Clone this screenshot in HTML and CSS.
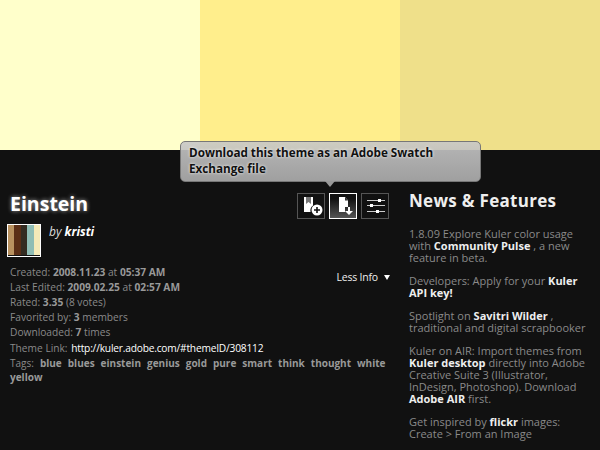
FILE: index.html
```html
<!DOCTYPE html>
<html lang="en">
<head>
<meta charset="utf-8">
<title>Einstein</title>
<link rel="stylesheet" href="styles.css">
</head>
<body>
<div class="app">
  <div class="swatches">
    <div class="swatch s1"></div>
    <div class="swatch s2"></div>
    <div class="swatch s3"></div>
  </div>
  <div class="panel">
    <div class="theme">
      <div class="head">
        <h1 class="title">Einstein</h1>
        <div class="tools">
          <span class="tool">
            <svg width="26" height="24" viewBox="0 0 26 24"><path d="M6 3h9v8.500a6.500 6.500 0 0 0-2.500 6.500H6z" fill="#fff"/><path d="M8 3h5v7l-2.500-2L8 10z" fill="#777"/><circle cx="19" cy="16" r="5.500" fill="#fff"/><path d="M16 16h6M19 13v6" stroke="#111" stroke-width="1.600"/></svg>
          </span>
          <span class="tool tool-on">
            <svg width="26" height="24" viewBox="0 0 26 24"><path d="M9 3h6l3 3.500V13h-3v5H9z" fill="#fff"/><path d="M15 3v3.500h3z" fill="#333"/><path d="M18 13h2v4h3l-4 4-4-4h3z" fill="#fff"/></svg>
          </span>
          <span class="tool">
            <svg width="26" height="24" viewBox="0 0 26 24"><path d="M5 6.500h18M5 11.500h18M5 17.500h18" stroke="#ccc"/><rect x="16" y="5" width="3" height="3" fill="#fff"/><rect x="8" y="10" width="3" height="3" fill="#fff"/><rect x="14" y="16" width="3" height="3" fill="#fff"/></svg>
          </span>
        </div>
      </div>
      <div class="author">
        <div class="thumb"><i class="c1"></i><i class="c2"></i><i class="c3"></i><i class="c4"></i><i class="c5"></i></div>
        <div class="by">by <b>kristi</b></div>
      </div>
      <div class="meta">
        <div class="rows">
          <p>Created: <b>2008.11.23</b> at <b>05:37 AM</b></p>
          <p>Last Edited: <b>2009.02.25</b> at <b>02:57 AM</b></p>
          <p>Rated: <b>3.35</b> (8 votes)</p>
          <p>Favorited by: <b>3</b> members</p>
          <p>Downloaded: <b>7</b> times</p>
        </div>
        <div class="less">Less Info <span class="tri"></span></div>
      </div>
      <p class="link">Theme Link: <span class="url">http://kuler.adobe.com/#themeID/308112</span></p>
      <p class="tags">Tags: <b>blue</b> <b>blues</b> <b>einstein</b> <b>genius</b> <b>gold</b> <b>pure</b> <b>smart</b> <b>think</b> <b>thought</b> <b>white</b> <b>yellow</b></p>
    </div>
    <aside class="news">
      <h2>News &amp; Features</h2>
      <p>1.8.09 Explore Kuler color usage with <b>Community Pulse</b> , a new feature in beta.</p>
      <p>Developers: Apply for your <b>Kuler API key!</b></p>
      <p>Spotlight on <b>Savitri Wilder</b> , traditional and digital scrapbooker</p>
      <p>Kuler on AIR: Import themes from <b>Kuler desktop</b> directly into Adobe Creative Suite 3 (Illustrator, InDesign, Photoshop). Download <b>Adobe AIR</b> first.</p>
      <p>Get inspired by <b>flickr</b> images: Create &gt; From an Image</p>
    </aside>
  </div>
  <div class="tip">Download this theme as an Adobe Swatch Exchange file</div>
</div>
</body>
</html>
```
FILE: styles.css
```css
html, body { margin: 0; padding: 0; }
body { background: #111; font-family: "Open Sans", "Noto Sans", sans-serif; color: #8a8a8a; }
p, h1, h2 { margin: 0; font-weight: normal; }
.app { position: relative; width: 600px; height: 450px; overflow: hidden; background: #111; }
.swatches { display: flex; height: 150px; }
.swatch { width: 200px; }
.s1 { background: #ffffcb; }
.s2 { background: #ffee8c; }
.s3 { background: #efe08a; }
.panel { display: flex; height: 300px; }
.theme { width: 379px; margin-left: 10px; flex: none; padding-top: 43px; }
.head { display: flex; justify-content: space-between; align-items: flex-start; }
.title { font-size: 19.500px; line-height: 22px; font-weight: 700; color: #fff; text-shadow: 0 0 4px rgba(255,255,255,.6); }
.tools { display: flex; gap: 4px; }
.tool { width: 28px; height: 26px; box-sizing: border-box; border: 1px solid #555; display: flex; overflow: hidden; }
.tool-on { border-color: #fff; background: linear-gradient(#111 20%, #555); }
.author { display: flex; gap: 8px; margin-top: 5px; margin-left: -3px; }
.thumb { display: flex; width: 34px; height: 33px; box-sizing: border-box; border: 1px solid #fff; background: #111; padding-bottom: 1px; }
.thumb i { flex: 1; }
.c1 { background: #b8915f; }
.c2 { background: #5a2e16; }
.c3 { background: #332c22; }
.c4 { background: #8fbdb5; }
.c5 { background: #f4e9b8; }
.by { font-size: 12px; line-height: 16px; font-style: italic; color: #ddd; }
.by b { color: #fff; }
.meta { display: flex; justify-content: space-between; margin-top: 8px; }
.rows p, .link, .tags { font-size: 10.200px; line-height: 15px; }
.rows b, .tags b { color: #999; font-weight: 700; }
.less { font-size: 10.500px; letter-spacing: -.2px; line-height: 15px; color: #eee; margin-top: 5px; margin-right: -1px; display: flex; align-items: center; gap: 6px; align-self: flex-start; }
.tri { width: 0; height: 0; border: 3px solid transparent; border-top: 5px solid #fff; border-bottom: 0; }
.link { margin-top: 1px; }
.url { color: #fff; margin-left: 1px; letter-spacing: -.2px; }
.tags { line-height: 14px; font-size: 10px; word-spacing: 3.400px; }
.news { width: 180px; margin-left: 20px; padding-top: 40px; font-size: 11px; line-height: 12px; color: #8a8a8a; }
.news h2 { font-size: 17px; letter-spacing: .3px; line-height: 22px; font-weight: 700; color: #eee; margin-bottom: 16px; }
.news p { margin-bottom: 11px; }
.news b { color: #eee; }
.tip { position: absolute; left: 180px; top: 141px; width: 301px; height: 41px; box-sizing: border-box; padding: 2px 8px; border-radius: 5px; background: linear-gradient(rgba(200,200,200,.9), rgba(175,175,175,.9)); border: 1px solid #777; color: #111; font-size: 11.700px; line-height: 16px; font-weight: 700; text-shadow: 0 0 3px #fff; }
.tip::after { content: ""; position: absolute; left: 144px; top: 100%; border: 5px solid transparent; border-top: 6px solid #999; border-bottom: 0; }
```
